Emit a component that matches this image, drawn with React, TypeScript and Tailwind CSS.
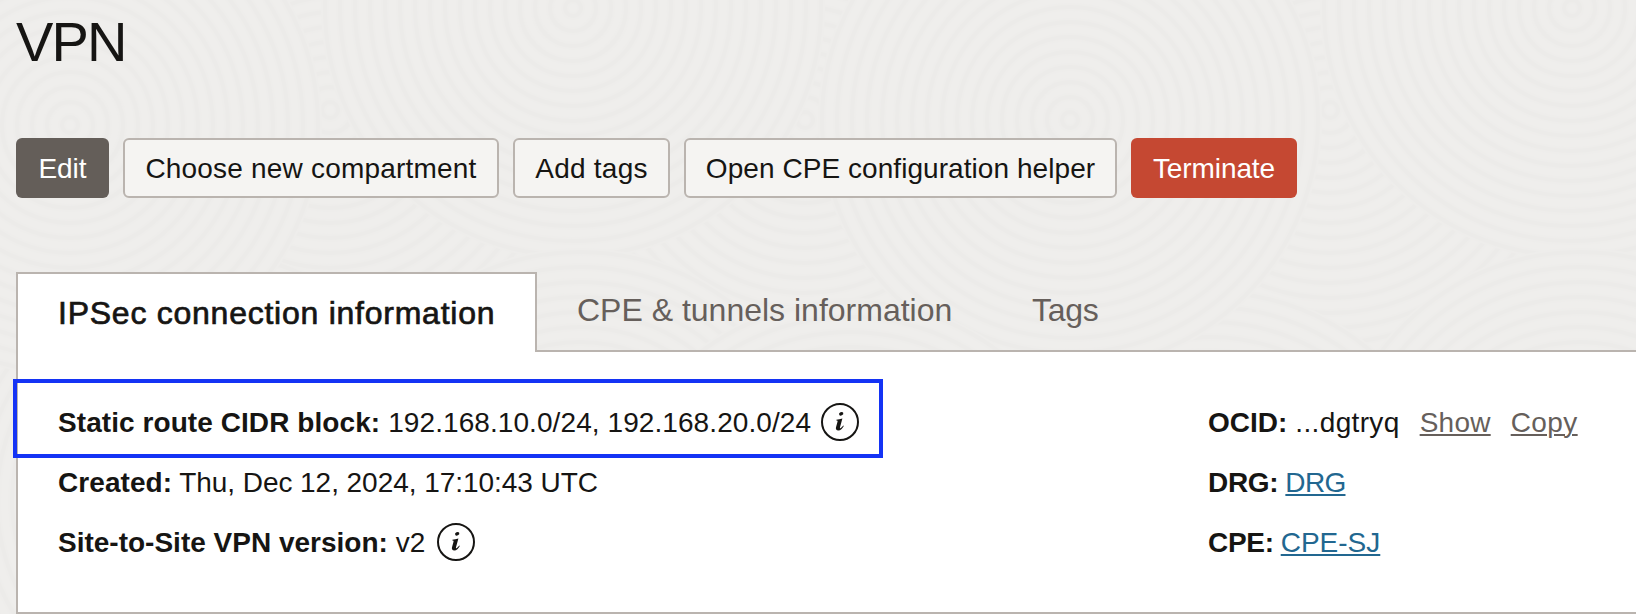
import type { ReactNode } from 'react';

const RINGS = Array.from({ length: 17 }, (_, i) => 8 + i * 15);

// later discs cover the earlier ones
const SWIRLS = [
  { cx: 330, cy: 110 },
  { cx: 1330, cy: 110 },
  { cx: 860, cy: 360 },
  { cx: 1210, cy: 540 },
  { cx: 200, cy: 500 },
  { cx: 805, cy: 120 },
  { cx: 1070, cy: 120 },
  { cx: 70, cy: 125 },
  { cx: 573, cy: 8 },
  { cx: 1572, cy: 8 },
  { cx: 580, cy: 500 },
  { cx: 850, cy: 550 },
  { cx: 1580, cy: 500 },
];

function Background() {
  return (
    <svg className="absolute inset-0 h-full w-full" aria-hidden="true">
      {SWIRLS.map((s) => (
        <g key={`${s.cx}-${s.cy}`}>
          <circle cx={s.cx} cy={s.cy} r={248} fill="#efeeec" />
          {RINGS.map((r) => (
            <g key={r} fill="none">
              <circle cx={s.cx} cy={s.cy} r={r} stroke="#eeedeb" strokeWidth={8} />
              <circle cx={s.cx} cy={s.cy} r={r} stroke="#ecebe9" strokeWidth={4} />
            </g>
          ))}
        </g>
      ))}
    </svg>
  );
}

function InfoIcon() {
  return (
    <svg width="38" height="38" viewBox="0 0 38 38" fill="none" className="shrink-0">
      <circle cx="19" cy="19" r="18" stroke="#161513" strokeWidth="2" />
      <ellipse cx="20.2" cy="10.8" rx="2.2" ry="1.7" transform="rotate(-25 20.2 10.8)" fill="#161513" />
      <path
        d="M15.4 16.8C17.3 16.6 19.4 16 21.4 15.4L19 24.2C18.7 25.4 19.2 25.5 20.1 24.7C20.9 24 21.6 23.2 22.2 22.4L22.8 22.9C21.4 25.3 19.6 27.4 17.3 27.4C15.3 27.4 14.5 26.3 15 24.3L16.5 18.8C16.8 17.8 16.4 17.6 15.3 17.6Z"
        fill="#161513"
      />
    </svg>
  );
}

function Row({ label, children }: { label: ReactNode; children: ReactNode }) {
  return (
    <div className="flex h-[60px] items-center whitespace-nowrap">
      {label}
      {children}
    </div>
  );
}

export default function App() {
  return (
    <div className="relative h-[614px] w-[1636px] overflow-hidden bg-[#efeeec] font-['Liberation_Sans',Arial,sans-serif] text-[28px] leading-8 text-[#161513]">
      <Background />

      <div className="relative flex h-full flex-col pl-4">
        <h1 className="h-[138px] pt-[10px] text-[56px] leading-[64px] tracking-[-1.8px]">VPN</h1>

        {/* Actions */}
        <div className="flex h-[60px] gap-[14px] whitespace-nowrap">
          <button className="w-[93px] rounded-md bg-[#645e59] pt-[2px] text-white">Edit</button>
          <button className="w-[376px] rounded-md border-2 border-[#bab4af] bg-[#f5f4f2] pt-[2px] tracking-[0.2px]">
            Choose new compartment
          </button>
          <button className="w-[157px] rounded-md border-2 border-[#bab4af] bg-[#f5f4f2] pt-[2px] tracking-[0.25px]">Add tags</button>
          <button className="w-[433px] rounded-md border-2 border-[#bab4af] bg-[#f5f4f2] pt-[2px] tracking-[0.06px]">
            Open CPE configuration helper
          </button>
          <button className="w-[166px] rounded-md bg-[#c54832] pt-[2px] tracking-[-0.1px] text-white">Terminate</button>
        </div>

        {/* Tabs */}
        <div className="relative z-10 mt-[74px] -mb-[2px] flex h-20 text-[32px] whitespace-nowrap">
          <div className="w-[521px] border-2 border-b-0 border-[#bab4af] bg-white pt-[23px] pl-10">
            <span className="tracking-[0.75px] [-webkit-text-stroke:0.7px_#161513]">IPSec connection information</span>
          </div>
          <div className="w-[455px] pt-[22px] pl-10 text-[#665f5b]">CPE &amp; tunnels information</div>
          <div className="pt-[22px] pl-10 tracking-[-0.3px] text-[#665f5b]">Tags</div>
        </div>

        {/* Details */}
        <div className="relative flex h-[264px] border-2 border-r-0 border-[#bab4af] bg-white pt-10 pl-10">
          <div className="w-[1150px]">
            <Row label={<b className="pt-[2px] tracking-[0.07px]">Static route CIDR block:</b>}>
              <span className="mr-[10px] ml-2 pt-[2px] tracking-[0.08px]">192.168.10.0/24, 192.168.20.0/24</span>
              <InfoIcon />
            </Row>
            <Row label={<b className="pt-[2px] tracking-[0.07px]">Created:</b>}>
              <span className="ml-[7px] pt-[2px] tracking-[-0.05px]">Thu, Dec 12, 2024, 17:10:43 UTC</span>
            </Row>
            <Row label={<b className="pt-[2px]">Site-to-Site VPN version:</b>}>
              <span className="mr-3 ml-2 pt-[2px]">v2</span>
              <InfoIcon />
            </Row>
          </div>
          <div>
            <Row label={<b className="pt-[2px]">OCID:</b>}>
              <span className="ml-2 pt-[2px] tracking-[0.35px]">...dgtryq</span>
              <a className="ml-5 pt-[2px] tracking-[0.25px] text-[#665f5b] underline decoration-2 underline-offset-2">Show</a>
              <a className="ml-5 pt-[2px] tracking-[0.4px] text-[#665f5b] underline decoration-2 underline-offset-2">Copy</a>
            </Row>
            <Row label={<b className="pt-[2px] tracking-[-0.3px]">DRG:</b>}>
              <a className="ml-[7px] pt-[2px] tracking-[-0.7px] text-[#226790] underline decoration-2 underline-offset-2">DRG</a>
            </Row>
            <Row label={<b className="pt-[2px] tracking-[-0.3px]">CPE:</b>}>
              <a className="ml-[7px] pt-[2px] text-[#226790] underline decoration-2 underline-offset-2">CPE-SJ</a>
            </Row>
          </div>
          <div className="absolute top-[27px] -left-[5px] h-[79px] w-[870px] border-4 border-[#1433f5]" />
        </div>
      </div>
    </div>
  );
}
